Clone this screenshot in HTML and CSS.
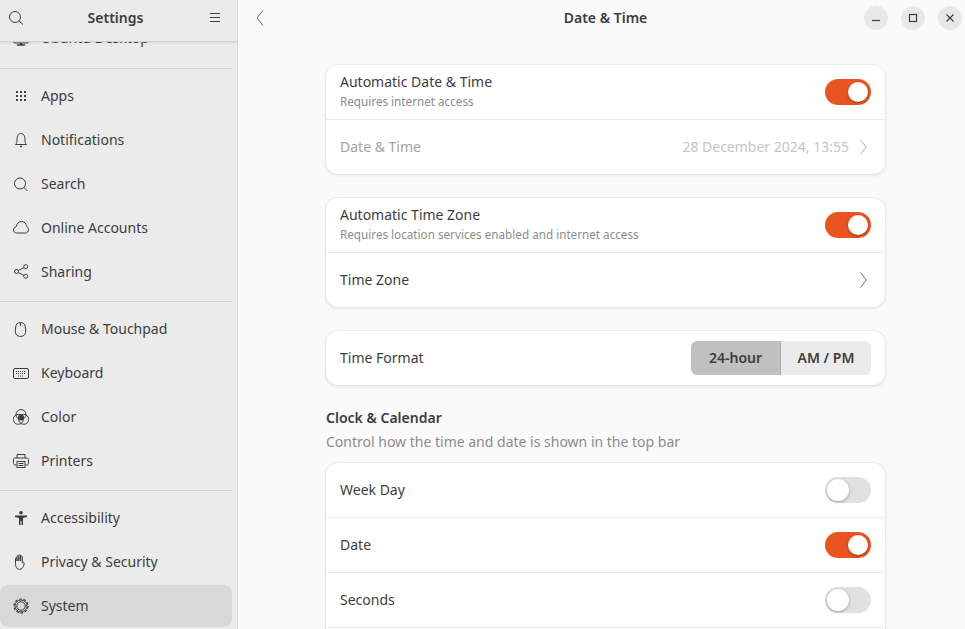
FILE: index.html
```html
<!DOCTYPE html>
<html lang="en">
<head>
    <meta charset="UTF-8">
    <title>Settings - Date &amp; Time</title>
    <link rel="stylesheet" href="styles.css">
</head>
<body>
    <div class="window">
        <aside class="sidebar">
            <header class="side-head">
                <svg class="ico" viewBox="0 0 16 16"><circle cx="7" cy="8" r="5.500"/><path d="M11 12l4 3.500"/></svg>
                <span class="side-title">Settings</span>
                <svg class="ico" viewBox="0 0 16 16"><path d="M3 4.500h10M3 8.500h10M3 12.500h10"/></svg>
            </header>
            <nav class="side-list">
                <div class="nav-clip">
                    <div class="nav-item">
                        <svg class="ico" viewBox="0 0 16 16"><rect x=".5" y="2" width="15" height="11" rx="1.500"/><path d="M8 13v2" stroke-width="2"/><path d="M4 15h8" stroke-width="1.500"/></svg>
                        <span>Ubuntu Desktop</span>
                    </div>
                </div>
                <hr class="sep">
                <div class="nav-item">
                    <svg class="ico" viewBox="0 0 16 16"><path class="dots" d="M3 3h2v2H3zM7 3h2v2H7zM11 3h2v2h-2zM3 7h2v2H3zM7 7h2v2H7zM11 7h2v2h-2zM3 11h2v2H3zM7 11h2v2H7zM11 11h2v2h-2z"/></svg>
                    <span>Apps</span>
                </div>
                <div class="nav-item">
                    <svg class="ico" viewBox="0 0 16 16"><path d="M2.500 12.500c1.200-.8 1.500-2.500 1.500-5C4 3.500 5.800 1.500 8 1.500s4 2 4 6c0 2.500.3 4.200 1.500 5z"/><path d="M7 14.500h2" stroke-width="1.400"/></svg>
                    <span>Notifications</span>
                </div>
                <div class="nav-item">
                    <svg class="ico" viewBox="0 0 16 16"><circle cx="7" cy="7.500" r="5.500"/><path d="M11 11.500l3.500 3.500"/></svg>
                    <span>Search</span>
                </div>
                <div class="nav-item">
                    <svg class="ico" viewBox="0 0 16 16"><path d="M3.500 13C1.700 13 .5 11.600.5 10c0-1.500 1-2.800 2.500-3.100C3.600 3.700 5.800 1.500 8.500 1.500c2.800 0 4.800 2 5 4.800 1.200.5 2 1.900 2 3.500 0 1.800-1.300 3.200-3 3.200z"/></svg>
                    <span>Online Accounts</span>
                </div>
                <div class="nav-item">
                    <svg class="ico" viewBox="0 0 16 16"><circle cx="3.500" cy="7.500" r="2"/><circle cx="12.700" cy="2.700" r="2"/><circle cx="12.700" cy="12.300" r="2"/><path d="M5.300 6.500l5.600-2.900M5.300 8.500l5.600 2.900"/></svg>
                    <span>Sharing</span>
                </div>
                <hr class="sep">
                <div class="nav-item">
                    <svg class="ico" viewBox="0 0 16 16"><path d="M7.500 1.500c-3 0-4.500 1.700-4.800 4.500l-.4 4c-.2 3 1.700 5.500 5.200 5.500s5.400-2.500 5.200-5.500l-.4-4C12 3.200 10.500 1.500 7.500 1.500z"/><path d="M7.500 2v3"/></svg>
                    <span>Mouse &amp; Touchpad</span>
                </div>
                <div class="nav-item">
                    <svg class="ico" viewBox="0 0 16 16"><rect x=".5" y="3.500" width="15" height="10" rx="1.500"/><path d="M3 6.500h10M3 8.500h10M5 11h6" stroke-dasharray="1 1"/></svg>
                    <span>Keyboard</span>
                </div>
                <div class="nav-item">
                    <svg class="ico" viewBox="0 0 16 16"><circle cx="8" cy="5.500" r="5"/><circle cx="5.300" cy="10.300" r="5"/><circle cx="10.700" cy="10.300" r="5"/><circle class="dots" cx="8" cy="8.500" r="3"/></svg>
                    <span>Color</span>
                </div>
                <div class="nav-item">
                    <svg class="ico" viewBox="0 0 16 16"><path d="M4 5V1.500h8V5M3.500 12H2c-.8 0-1.500-.7-1.500-1.500v-4C.5 5.700 1.200 5 2 5h12c.8 0 1.500.7 1.500 1.500v4c0 .8-.7 1.500-1.500 1.500h-1.500"/><rect x="4" y="8.500" width="8" height="6"/><path d="M5.500 10.500h5M5.500 12.500h5"/></svg>
                    <span>Printers</span>
                </div>
                <hr class="sep">
                <div class="nav-item">
                    <svg class="ico" viewBox="0 0 16 16"><circle class="dots" cx="8" cy="2.800" r="1.800"/><path class="dots" d="M2 5.500h12V7l-4 1v7H8.500v-4h-1v4H6V8L2 7z"/></svg>
                    <span>Accessibility</span>
                </div>
                <div class="nav-item">
                    <svg class="ico" viewBox="1 0 16 16"><path d="M3.500 9V4.500c0-1.300 1.500-1.300 1.500 0V7 2.500c0-1.300 1.800-1.300 1.800 0V7 1.800c0-1.300 1.800-1.300 1.800 0V7 2.800c0-1.300 1.700-1.300 1.700 0V9c.5-1 1.800-1 1.800 0 0 2-.5 3-1 4s-1.500 2.300-3.500 2.300c-2.500 0-4-1.300-4.100-6.300z"/></svg>
                    <span>Privacy &amp; Security</span>
                </div>
                <div class="nav-item active">
                    <svg class="ico" viewBox="0 0 16 16"><circle cx="8" cy="8" r="4.200"/><circle cx="8" cy="8" r="6"/><circle cx="8" cy="8" r="7" stroke-width="1.200" stroke-dasharray="2.700 1.700"/></svg>
                    <span>System</span>
                </div>
            </nav>
        </aside>

        <main class="content">
            <header class="top-bar">
                <svg class="ico back" viewBox="0 0 16 16"><path d="M10 .5L4 8l6 7.500"/></svg>
                <span class="top-title">Date &amp; Time</span>
                <div class="win-btns">
                    <button class="win-btn"><svg class="ico win-ico" viewBox="0 0 10 10"><path d="M1 7.500h8"/></svg></button>
                    <button class="win-btn"><svg class="ico win-ico" viewBox="0 0 10 10"><rect x="1.500" y="1.500" width="7" height="7"/></svg></button>
                    <button class="win-btn"><svg class="ico win-ico" viewBox="0 0 10 10"><path d="M1.500 1.500l7 7M8.500 1.500l-7 7"/></svg></button>
                </div>
            </header>

            <div class="page">
                <section class="card">
                    <div class="row">
                        <div class="row-text">
                            <div class="row-title">Automatic Date &amp; Time</div>
                            <div class="row-sub">Requires internet access</div>
                        </div>
                        <div class="switch on"></div>
                    </div>
                    <div class="row dim">
                        <div class="row-title">Date &amp; Time</div>
                        <span class="row-value">28 December 2024, 13:55</span>
                        <svg class="ico chev" viewBox="0 0 16 16"><path d="M5.500 .5L11 8l-5.500 7.500"/></svg>
                    </div>
                </section>

                <section class="card">
                    <div class="row">
                        <div class="row-text">
                            <div class="row-title">Automatic Time Zone</div>
                            <div class="row-sub">Requires location services enabled and internet access</div>
                        </div>
                        <div class="switch on"></div>
                    </div>
                    <div class="row">
                        <div class="row-title">Time Zone</div>
                        <svg class="ico chev" viewBox="0 0 16 16"><path d="M5.500 .5L11 8l-5.500 7.500"/></svg>
                    </div>
                </section>

                <section class="card">
                    <div class="row">
                        <div class="row-title">Time Format</div>
                        <div class="segmented">
                            <span class="seg selected">24-hour</span>
                            <span class="seg">AM / PM</span>
                        </div>
                    </div>
                </section>

                <div class="group-head">
                    <div class="group-title">Clock &amp; Calendar</div>
                    <div class="group-sub">Control how the time and date is shown in the top bar</div>
                </div>

                <section class="card">
                    <div class="row">
                        <div class="row-title">Week Day</div>
                        <div class="switch"></div>
                    </div>
                    <div class="row">
                        <div class="row-title">Date</div>
                        <div class="switch on"></div>
                    </div>
                    <div class="row">
                        <div class="row-title">Seconds</div>
                        <div class="switch"></div>
                    </div>
                    <div class="row"></div>
                </section>
            </div>
        </main>
    </div>
</body>
</html>
```

FILE: styles.css
```css
* { box-sizing: border-box; }
html, body { margin: 0; height: 100%; overflow: hidden; }
body { font-family: "Noto Sans", "Open Sans", sans-serif; font-size: 14px; color: #3d3d3d; background: #fafafa; }

.window { display: flex; height: 629px; overflow: hidden; }
.ico { width: 16px; height: 16px; flex: none; fill: none; stroke: #3d3d3d; stroke-width: 1; }
.dots { fill: #3d3d3d; stroke: none; }

/* sidebar */
.sidebar { width: 238px; flex: none; display: flex; flex-direction: column; background: #ebebeb; border-right: 1px solid #d9d9d9; overflow: hidden; }
.side-head { height: 42px; flex: none; display: flex; align-items: center; padding: 0 14px 7px 8px; border-bottom: 1px solid #d3d3d3; box-shadow: 0 1px 2px rgba(0,0,0,0.08); position: relative; z-index: 1; }
.side-title { font-weight: 600; flex: 1; text-align: center; }
.side-list { flex: 1; padding-right: 5px; overflow: hidden; }
.nav-clip { height: 26px; overflow: hidden; }
.nav-clip .nav-item { margin-top: -26px; }
.nav-item { height: 44px; display: flex; align-items: center; gap: 12px; padding-left: 13px; border-radius: 8px; }
.nav-item span { padding-bottom: 2px; }
.nav-item.active { background: #d8d8d8; height: 42px; margin-top: 1px; }
.sep { height: 1px; border: 0; margin: 7px 0 5px; background: #d3d3d3; }
.nav-clip + .sep { margin-top: 0; }

/* content */
.content { flex: 1; display: flex; flex-direction: column; min-width: 0; }
.top-bar { height: 36px; flex: none; display: grid; grid-template-columns: 1fr auto 1fr; align-items: center; padding: 0 3px 0 11px; }
.back { justify-self: start; margin-left: 4px; stroke: #666; }
.top-title { font-weight: 600; padding-bottom: 2px; }
.win-btns { justify-self: end; display: flex; gap: 13px; }
.win-btn { width: 24px; height: 24px; padding: 0; border: 0; border-radius: 50%; background: #e8e8e8; display: flex; align-items: center; justify-content: center; }
.win-ico { width: 10px; height: 10px; stroke-width: 1.2; }

.page { width: 559px; margin: 29px 0 0 88px; display: flex; flex-direction: column; }
.card { background: #fff; border-radius: 12px; box-shadow: 0 0 0 1px rgba(0,0,0,0.03), 0 1px 3px 1px rgba(0,0,0,0.07); margin-bottom: 24px; }
.row { height: 55px; display: flex; align-items: center; justify-content: space-between; padding: 0 14px; border-top: 1px solid #ebebeb; }
.row:first-child { height: 54px; border-top: 0; }
.row-title { padding-bottom: 2px; }
.row-text { margin-bottom: 3px; }
.row-text .row-title { padding-bottom: 0; }
.row-sub { font-size: 11.7px; color: #8c8c8c; margin-top: 2px; }
.row.dim .row-title { color: #a3a3a3; }
.row-value { margin-left: auto; padding-bottom: 2px; color: #c4c4c4; }
.chev { margin-left: 6px; stroke: #757575; }
.row-title + .chev { margin-left: auto; }
.row.dim .chev { stroke: #b0b0b0; }

.switch { width: 46px; height: 26px; flex: none; border-radius: 13px; background: #e0e0e0; position: relative; }
.switch::after { content: ""; position: absolute; top: 2px; left: 2px; width: 22px; height: 22px; border-radius: 50%; background: #fff; box-shadow: 0 1px 3px rgba(0,0,0,0.3); }
.switch.on { background: #e95420; }
.switch.on::after { top: 3px; left: 23px; width: 20px; height: 20px; }

.segmented { display: flex; height: 34px; border-radius: 6px; overflow: hidden; font-weight: 600; }
.seg { display: flex; align-items: center; justify-content: center; width: 90px; padding-bottom: 2px; background: #ebebeb; }
.seg.selected { background: #c0c0c0; border-right: 1px solid #acacac; }

.group-head { margin: -1px 0 11px; }
.group-title { font-weight: 600; line-height: 20px; }
.group-sub { color: #8c8c8c; line-height: 20px; margin-top: 4px; }
```
